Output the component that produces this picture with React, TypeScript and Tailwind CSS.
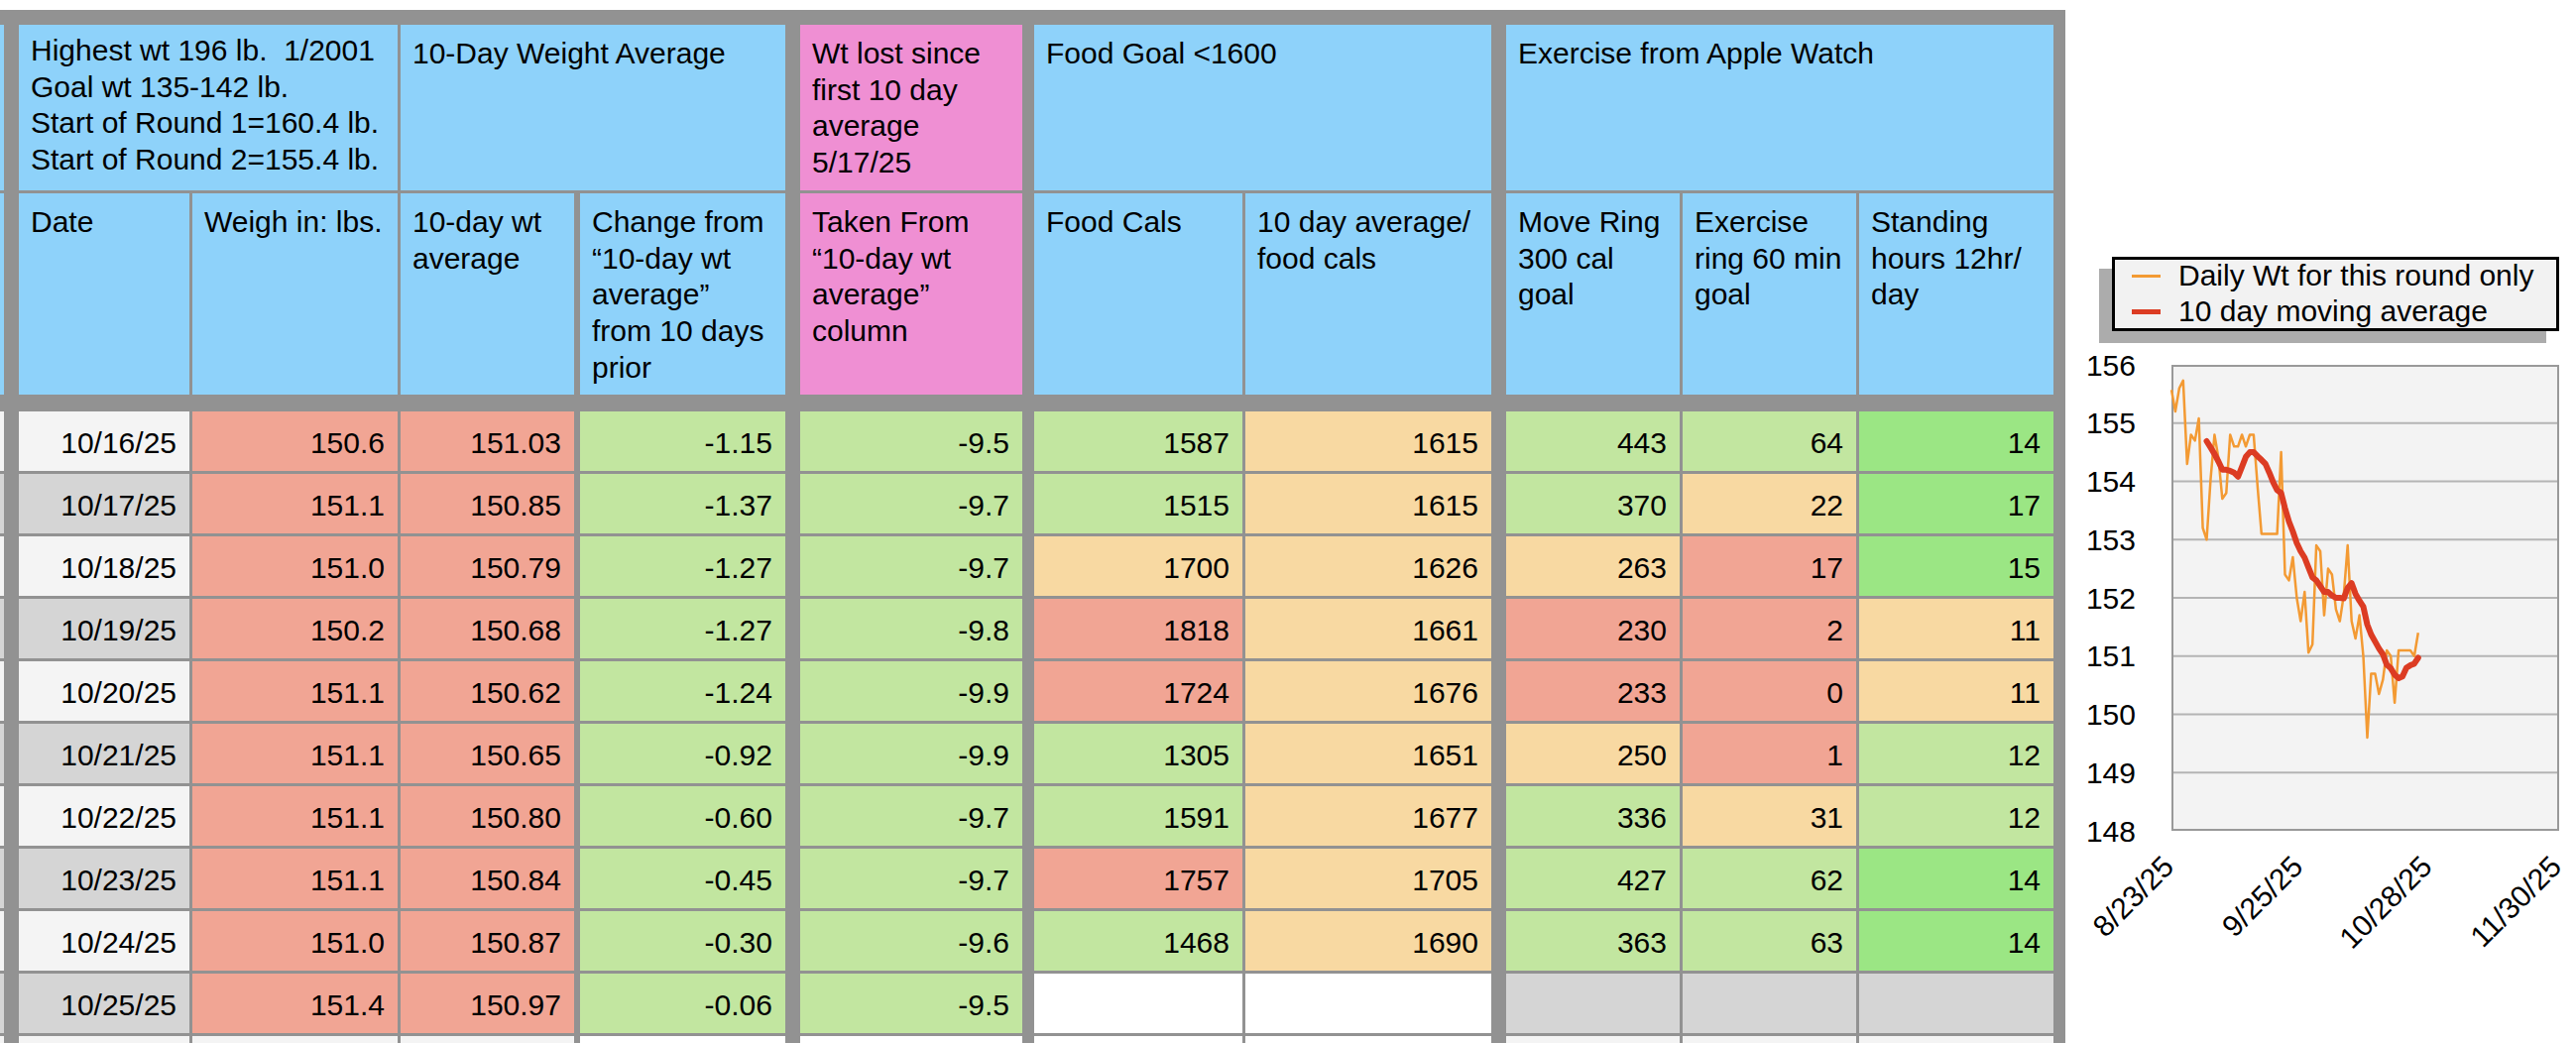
import React from 'react';

// cell fills used by the sheet
const BG: Record<string, string> = {
  W: 'bg-white',
  L: 'bg-[#f4f4f4]',
  D: 'bg-[#d5d5d5]',
  R: 'bg-[#f1a594]',
  G: 'bg-[#c2e6a0]',
  B: 'bg-[#9be684]',
  O: 'bg-[#f8d9a2]',
  H: 'bg-[#8ed2fa]',
  P: 'bg-[#ef8fd3]',
};

// column widths + the grey rule in front of each column
const COLS = [
  { w: 'w-[172px]', ml: 'ml-[15px]' }, // date
  { w: 'w-[207px]', ml: 'ml-[3px]' }, // weigh in
  { w: 'w-[175px]', ml: 'ml-[3px]' }, // 10-day avg
  { w: 'w-[207px]', ml: 'ml-[6px]' }, // change
  { w: 'w-[224px]', ml: 'ml-[15px]' }, // wt lost
  { w: 'w-[210px]', ml: 'ml-[12px]' }, // food cals
  { w: 'w-[248px]', ml: 'ml-[3px]' }, // food avg
  { w: 'w-[175px]', ml: 'ml-[15px]' }, // move
  { w: 'w-[175px]', ml: 'ml-[3px]' }, // exercise
  { w: 'w-[196px]', ml: 'ml-[3px]' }, // standing
];

const GROUPS = [
  {
    w: 'w-[382px]',
    ml: 'ml-[15px]',
    bg: 'H',
    pt: 'pt-[8px]',
    lines: [
      'Highest wt 196 lb.\u00a0 1/2001',
      'Goal wt 135-142 lb.',
      'Start of Round 1=160.4 lb.',
      'Start of Round 2=155.4 lb.',
    ],
  },
  { w: 'w-[388px]', ml: 'ml-[3px]', bg: 'H', pt: 'pt-[11px]', lines: ['10-Day Weight Average'] },
  {
    w: 'w-[224px]',
    ml: 'ml-[15px]',
    bg: 'P',
    pt: 'pt-[11px]',
    lines: ['Wt lost since', 'first 10 day', 'average', '5/17/25'],
  },
  { w: 'w-[461px]', ml: 'ml-[12px]', bg: 'H', pt: 'pt-[11px]', lines: ['Food Goal <1600'] },
  { w: 'w-[552px]', ml: 'ml-[15px]', bg: 'H', pt: 'pt-[11px]', lines: ['Exercise from Apple Watch'] },
];

const SUBHEADS: { bg: string; lines: string[] }[] = [
  { bg: 'H', lines: ['Date'] },
  { bg: 'H', lines: ['Weigh in: lbs.'] },
  { bg: 'H', lines: ['10-day wt', 'average'] },
  { bg: 'H', lines: ['Change from', '\u201c10-day wt', 'average\u201d', 'from 10 days', 'prior'] },
  { bg: 'P', lines: ['Taken From', '\u201c10-day wt', 'average\u201d', 'column'] },
  { bg: 'H', lines: ['Food Cals'] },
  { bg: 'H', lines: ['10 day average/', 'food cals'] },
  { bg: 'H', lines: ['Move Ring', '300 cal', 'goal'] },
  { bg: 'H', lines: ['Exercise', 'ring 60 min', 'goal'] },
  { bg: 'H', lines: ['Standing', 'hours 12hr/', 'day'] },
];

type Cell = [string, string];

const ROWS: Cell[][] = [
  [['10/16/25', 'L'], ['150.6', 'R'], ['151.03', 'R'], ['-1.15', 'G'], ['-9.5', 'G'], ['1587', 'G'], ['1615', 'O'], ['443', 'G'], ['64', 'G'], ['14', 'B']],
  [['10/17/25', 'D'], ['151.1', 'R'], ['150.85', 'R'], ['-1.37', 'G'], ['-9.7', 'G'], ['1515', 'G'], ['1615', 'O'], ['370', 'G'], ['22', 'O'], ['17', 'B']],
  [['10/18/25', 'L'], ['151.0', 'R'], ['150.79', 'R'], ['-1.27', 'G'], ['-9.7', 'G'], ['1700', 'O'], ['1626', 'O'], ['263', 'O'], ['17', 'R'], ['15', 'B']],
  [['10/19/25', 'D'], ['150.2', 'R'], ['150.68', 'R'], ['-1.27', 'G'], ['-9.8', 'G'], ['1818', 'R'], ['1661', 'O'], ['230', 'R'], ['2', 'R'], ['11', 'O']],
  [['10/20/25', 'L'], ['151.1', 'R'], ['150.62', 'R'], ['-1.24', 'G'], ['-9.9', 'G'], ['1724', 'R'], ['1676', 'O'], ['233', 'R'], ['0', 'R'], ['11', 'O']],
  [['10/21/25', 'D'], ['151.1', 'R'], ['150.65', 'R'], ['-0.92', 'G'], ['-9.9', 'G'], ['1305', 'G'], ['1651', 'O'], ['250', 'O'], ['1', 'R'], ['12', 'G']],
  [['10/22/25', 'L'], ['151.1', 'R'], ['150.80', 'R'], ['-0.60', 'G'], ['-9.7', 'G'], ['1591', 'G'], ['1677', 'O'], ['336', 'G'], ['31', 'O'], ['12', 'G']],
  [['10/23/25', 'D'], ['151.1', 'R'], ['150.84', 'R'], ['-0.45', 'G'], ['-9.7', 'G'], ['1757', 'R'], ['1705', 'O'], ['427', 'G'], ['62', 'G'], ['14', 'B']],
  [['10/24/25', 'L'], ['151.0', 'R'], ['150.87', 'R'], ['-0.30', 'G'], ['-9.6', 'G'], ['1468', 'G'], ['1690', 'O'], ['363', 'G'], ['63', 'G'], ['14', 'B']],
  [['10/25/25', 'D'], ['151.4', 'R'], ['150.97', 'R'], ['-0.06', 'G'], ['-9.5', 'G'], ['', 'W'], ['', 'W'], ['', 'D'], ['', 'D'], ['', 'D']],
  [['', 'L'], ['', 'L'], ['', 'L'], ['', 'W'], ['', 'W'], ['', 'W'], ['', 'W'], ['', 'L'], ['', 'L'], ['', 'L']],
];

// chart data, one point per day starting 8/23/25
const DAILY = [
  155.57, 155.2, 155.6, 155.73, 154.3, 154.8, 154.7, 155.08, 153.2, 153.0,
  154.04, 154.8, 154.4, 153.7, 153.8, 154.8, 154.6, 154.6, 154.8, 154.6,
  154.8, 154.8, 153.9, 153.1, 153.1, 153.1, 153.1, 153.1, 154.5, 152.4,
  152.3, 152.7, 152.0, 151.6, 152.1, 151.06, 151.2, 152.9, 152.8, 151.7,
  152.5, 152.4, 151.8, 151.6, 152.05, 152.9, 151.6, 151.3, 151.7, 151.0,
  149.6, 150.7, 150.7, 150.35, 150.6, 151.1, 151.0, 150.2, 151.1, 151.1,
  151.1, 151.1, 151.0, 151.4,
];

// 10 day moving average starts on day 9
const AVG = [
  154.69, 154.58, 154.47, 154.34, 154.2, 154.2, 154.18, 154.15, 154.08, 154.25,
  154.42, 154.5, 154.5, 154.43, 154.37, 154.3, 154.15, 153.98, 153.85, 153.8,
  153.54, 153.31, 153.14, 152.94, 152.8, 152.69, 152.52, 152.35, 152.3, 152.2,
  152.1, 152.1, 152.04, 152.0, 152.0, 151.99, 152.17, 152.25, 152.07, 151.95,
  151.85, 151.54, 151.37, 151.25, 151.13, 151.03, 150.85, 150.79, 150.68, 150.62,
  150.65, 150.8, 150.84, 150.87, 150.97,
];

const PX = 107;
const PY = 28;
const PW = 391;
const PH = 470;
const dayX = (d: number) => PX + (d * PW) / 99;
const valY = (v: number) => PY + ((156 - v) * PH) / 8;

function HeadCell({ w, ml, bg, pt, lines, h }: { w: string; ml: string; bg: string; pt: string; lines: string[]; h: string }) {
  return (
    <div className={`${w} ${ml} ${h} ${BG[bg]} ${pt} shrink-0 pl-[12px] leading-[36.67px] whitespace-nowrap`}>
      {lines.map((l, i) => (
        <div key={i}>{l}</div>
      ))}
    </div>
  );
}

function WeightChart() {
  const daily = DAILY.map((v, i) => `${dayX(i).toFixed(1)},${valY(v).toFixed(1)}`).join(' ');
  const avg = AVG.map((v, i) => `${dayX(i + 9).toFixed(1)},${valY(v).toFixed(1)}`).join(' ');
  const ticks = [
    { d: 0, label: '8/23/25' },
    { d: 33, label: '9/25/25' },
    { d: 66, label: '10/28/25' },
    { d: 99, label: '11/30/25' },
  ];

  return (
    <svg width={515} height={712} className="mt-[6px] block" fontSize={30} fill="#000">
      <rect x={PX + 1} y={PY + 1} width={PW - 2} height={PH - 2} fill="#f3f3f3" stroke="#999" strokeWidth={2} />
      {[1, 2, 3, 4, 5, 6, 7].map((k) => (
        <line key={k} x1={PX + 2} x2={PX + PW - 2} y1={PY + (k * PH) / 8} y2={PY + (k * PH) / 8} stroke="#b4b4b4" strokeWidth={2} />
      ))}
      {[156, 155, 154, 153, 152, 151, 150, 149, 148].map((v) => (
        <text key={v} x={71} y={valY(v) + 10.5} textAnchor="end">
          {v}
        </text>
      ))}
      {ticks.map((t) => {
        const x = dayX(t.d) + 4;
        return (
          <text key={t.label} x={x} y={536} textAnchor="end" transform={`rotate(-45 ${x} 536)`}>
            {t.label}
          </text>
        );
      })}
      <polyline points={daily} fill="none" stroke="#f39a33" strokeWidth={2.5} strokeLinejoin="round" />
      <polyline points={avg} fill="none" stroke="#dc3c23" strokeWidth={6} strokeLinejoin="round" strokeLinecap="round" />
    </svg>
  );
}

export default function App() {
  return (
    <div className="h-[1052px] overflow-hidden bg-white flex text-[30px] text-black font-['Liberation_Sans',Arial,Helvetica,sans-serif]">
      <div className="mt-[10px] w-[2083px] shrink-0 self-start bg-[#929292] pt-[15px]">
        {/* group headers */}
        <div className="flex pr-[12px]">
          <div className={`w-[4px] h-[167px] shrink-0 ${BG.H}`} />
          {GROUPS.map((g, i) => (
            <HeadCell key={i} {...g} h="h-[167px]" />
          ))}
        </div>

        {/* column headers */}
        <div className="flex pr-[12px] mt-[3px]">
          <div className={`w-[4px] h-[203px] shrink-0 ${BG.H}`} />
          {SUBHEADS.map((s, i) => (
            <HeadCell key={i} w={COLS[i].w} ml={COLS[i].ml} bg={s.bg} pt="pt-[11px]" lines={s.lines} h="h-[203px]" />
          ))}
        </div>

        {/* data */}
        <div className="flex flex-col gap-[3px] mt-[17px]">
          {ROWS.map((row, r) => (
            <div key={r} className="flex pr-[12px]">
              <div className={`w-[4px] h-[60px] shrink-0 ${BG[row[0][1]]}`} />
              {row.map(([txt, c], i) => (
                <div
                  key={i}
                  className={`${COLS[i].w} ${COLS[i].ml} ${BG[c]} h-[60px] shrink-0 flex items-center justify-end pr-[13px] pt-[3px] leading-[36px]`}
                >
                  {txt}
                </div>
              ))}
            </div>
          ))}
        </div>
      </div>

      <div className="flex-1 flex flex-col">
        <div className="mt-[259px] ml-[47px] w-[451px] h-[75px] shrink-0 border-[3px] border-black bg-[#f2f2f2] shadow-[-13px_12px_0_0_#acacac] leading-[36px]">
          <div className="flex items-center h-[36px] -mt-[2px]">
            <span className="ml-[17px] w-[29px] h-[3px] bg-[#f39a33]" />
            <span className="ml-[18px] whitespace-nowrap">Daily Wt for this round only</span>
          </div>
          <div className="flex items-center h-[36px]">
            <span className="ml-[17px] w-[29px] h-[5px] bg-[#dc3c23]" />
            <span className="ml-[18px] whitespace-nowrap">10 day moving average</span>
          </div>
        </div>
        <WeightChart />
      </div>
    </div>
  );
}
